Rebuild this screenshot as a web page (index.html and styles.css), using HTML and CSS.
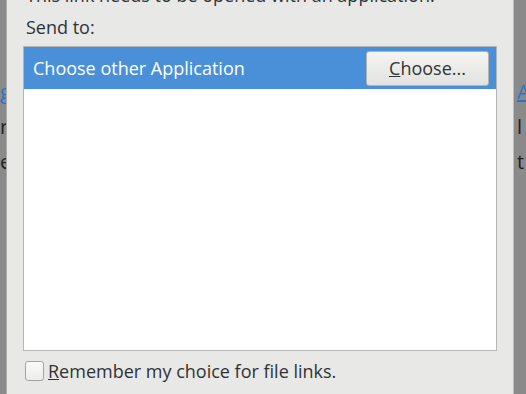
FILE: index.html
```html
<!DOCTYPE html>
<html lang="en">
<head>
    <meta charset="UTF-8">
    <title>Send to</title>
    <link rel="stylesheet" href="styles.css">
</head>
<body>
    <div class="desktop">
        <div class="behind behind-left">
            <span class="link">g</span>
            <span>r</span>
            <span>e</span>
        </div>
        <div class="behind behind-right">
            <span class="link">A</span>
            <span>l</span>
            <span>t</span>
        </div>

        <div class="dialog">
            <div class="intro">This link needs to be opened with an application.</div>
            <div class="send-label">Send to:</div>

            <div class="app-list">
                <div class="app-row selected">
                    <span class="app-name">Choose other Application</span>
                    <button class="btn"><u>C</u>hoose...</button>
                </div>
            </div>

            <label class="remember">
                <span class="checkbox"></span>
                <span><u>R</u>emember my choice for file links.</span>
            </label>
        </div>
    </div>
</body>
</html>
```

FILE: styles.css
```css
* {
    margin: 0;
    padding: 0;
    box-sizing: border-box;
}

body {
    width: 526px;
    height: 394px;
    overflow: hidden;
    font-family: 'Open Sans', 'Noto Sans', sans-serif;
    background: #8a8a8a;
}

.desktop {
    position: relative;
    width: 526px;
    height: 394px;
}

.behind {
    position: absolute;
    top: 78px;
    display: flex;
    flex-direction: column;
    gap: 8px;
    font-size: 20px;
    color: #222;
}

.behind-left {
    left: 0;
}

.behind-right {
    left: 517px;
}

.behind .link {
    color: #2a76c6;
    text-decoration: underline;
}

.dialog {
    position: absolute;
    left: 6px;
    top: -10px;
    width: 508px;
    height: 404px;
    background: #e8e8e7;
    border-left: 1px solid #a9a9a9;
    border-right: 1px solid #bdbdbd;
    padding: 0 16px;
}

.intro {
    height: 17px;
    font-size: 18px;
    line-height: 17px;
    color: #2e3436;
    margin-top: -3px;
    padding-left: 3px;
    white-space: nowrap;
}

.send-label {
    font-size: 18px;
    color: #2e3436;
    padding: 13px 0 0 3px;
    line-height: 20px;
}

.app-list {
    margin-top: 9px;
    height: 305px;
    background: #fff;
    border: 1px solid #b6b6b3;
}

.app-row {
    height: 42px;
    display: flex;
    align-items: center;
    justify-content: space-between;
    padding: 0 7px 0 9px;
}

.app-row.selected {
    background: #4a90d9;
    color: #fff;
}

.app-name {
    font-size: 18px;
    line-height: 20px;
}

.btn {
    width: 123px;
    height: 35px;
    font-family: inherit;
    font-size: 18px;
    line-height: 20px;
    color: #2e3436;
    background: linear-gradient(#f4f4f3, #e2e2e0);
    border: 1px solid #b3b3b0;
    border-radius: 3px;
}

.remember {
    display: flex;
    align-items: center;
    gap: 4px;
    margin-top: 10px;
    padding-left: 2px;
    font-size: 18px;
    line-height: 20px;
    color: #2e3436;
}

.checkbox {
    width: 19px;
    height: 20px;
    border: 1px solid #a4a4a1;
    border-radius: 3px;
    background: linear-gradient(#fafafa, #ececeb);
}
```
